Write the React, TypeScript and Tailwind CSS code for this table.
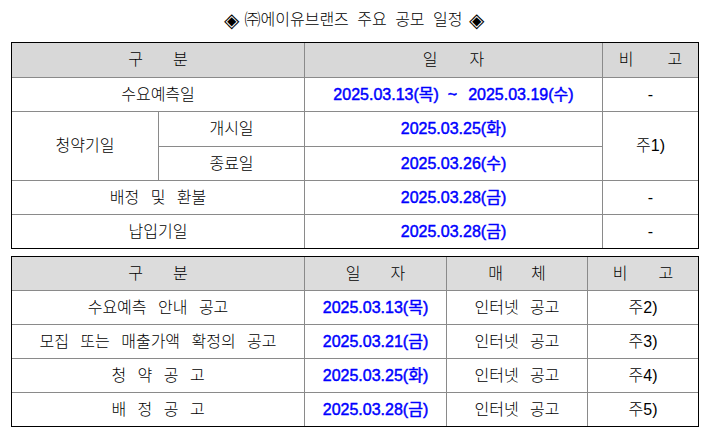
import React from "react";

const KR = { fontFamily: '"Liberation Sans", "Noto Sans CJK KR", sans-serif' } as React.CSSProperties;

function Cell({ children, className = "" }: { children?: React.ReactNode; className?: string }) {
  return (
    <div className={`bg-white flex items-center justify-center text-[16px] text-black font-light [word-spacing:7px] whitespace-nowrap ${className}`}>
      {children}
    </div>
  );
}

function Head({ a, b, gap = "gap-[30px]", className = "" }: { a: string; b: string; gap?: string; className?: string }) {
  return (
    <div className={`flex items-center justify-center text-[16px] text-black font-light ${gap} ${className}`}>
      <span>{a}</span>
      <span>{b}</span>
    </div>
  );
}

function D({ children }: { children: React.ReactNode }) {
  return (
    <span className="text-[#0000ff] font-normal [-webkit-text-stroke:0.45px_#0000ff] [word-spacing:0px]">
      {children}
    </span>
  );
}

export default function App() {
  return (
    <div className="w-[708px] h-[433px] bg-white overflow-hidden" style={KR}>
      <div className="h-[42px] flex items-center justify-center pb-[2px] text-[16px] text-black font-light [word-spacing:4px]">
        <span style={{ fontFamily: '"DejaVu Sans", sans-serif' }} className="text-[20px] leading-none">◈</span>
        <span className="ml-[6px]">㈜에이유브랜즈 주요 공모 일정</span>
        <span style={{ fontFamily: '"DejaVu Sans", sans-serif' }} className="text-[20px] leading-none ml-[7px]">◈</span>
      </div>

      <div className="ml-[11px] w-[688px] border border-black bg-[#8a8a8a]">
        <div className="grid grid-cols-[146px_145px_297px_95px] grid-rows-[34px_33px_34px_33px_33px_33px] gap-px">
          <Head a="구" b="분" className="col-span-2 bg-[#d8d8d8]" />
          <Head a="일" b="자" gap="gap-[32px]" className="bg-[#d8d8d8]" />
          <Head a="비" b="고" gap="gap-[34px]" className="bg-[#d8d8d8]" />

          <Cell className="col-span-2">수요예측일</Cell>
          <Cell>
            <D>2025.03.13(목)</D>
            <span className="text-[#0000ff] [-webkit-text-stroke:0.45px_#0000ff] ml-[9px] mr-[11px]">~</span>
            <D>2025.03.19(수)</D>
          </Cell>
          <Cell>-</Cell>

          <Cell className="row-span-2">청약기일</Cell>
          <Cell>개시일</Cell>
          <Cell><D>2025.03.25(화)</D></Cell>
          <Cell className="row-span-2">주1)</Cell>
          <Cell>종료일</Cell>
          <Cell><D>2025.03.26(수)</D></Cell>

          <Cell className="col-span-2">배정 및 환불</Cell>
          <Cell><D>2025.03.28(금)</D></Cell>
          <Cell>-</Cell>

          <Cell className="col-span-2">납입기일</Cell>
          <Cell><D>2025.03.28(금)</D></Cell>
          <Cell>-</Cell>
        </div>
      </div>

      <div className="ml-[11px] mt-[7px] w-[688px] border border-black bg-[#8a8a8a]">
        <div className="grid grid-cols-[292px_141px_140px_110px] grid-rows-[33px_33px_33px_33px_33px] gap-px">
          <Head a="구" b="분" className="bg-[#dcdcdc]" />
          <Head a="일" b="자" className="bg-[#dcdcdc]" />
          <Head a="매" b="체" gap="gap-[28px]" className="bg-[#dcdcdc]" />
          <Head a="비" b="고" gap="gap-[31px]" className="bg-[#dcdcdc]" />

          <Cell>수요예측 안내 공고</Cell>
          <Cell><D>2025.03.13(목)</D></Cell>
          <Cell>인터넷 공고</Cell>
          <Cell>주2)</Cell>

          <Cell>모집 또는 매출가액 확정의 공고</Cell>
          <Cell><D>2025.03.21(금)</D></Cell>
          <Cell>인터넷 공고</Cell>
          <Cell>주3)</Cell>

          <Cell>청 약 공 고</Cell>
          <Cell><D>2025.03.25(화)</D></Cell>
          <Cell>인터넷 공고</Cell>
          <Cell>주4)</Cell>

          <Cell>배 정 공 고</Cell>
          <Cell><D>2025.03.28(금)</D></Cell>
          <Cell>인터넷 공고</Cell>
          <Cell>주5)</Cell>
        </div>
      </div>
    </div>
  );
}
